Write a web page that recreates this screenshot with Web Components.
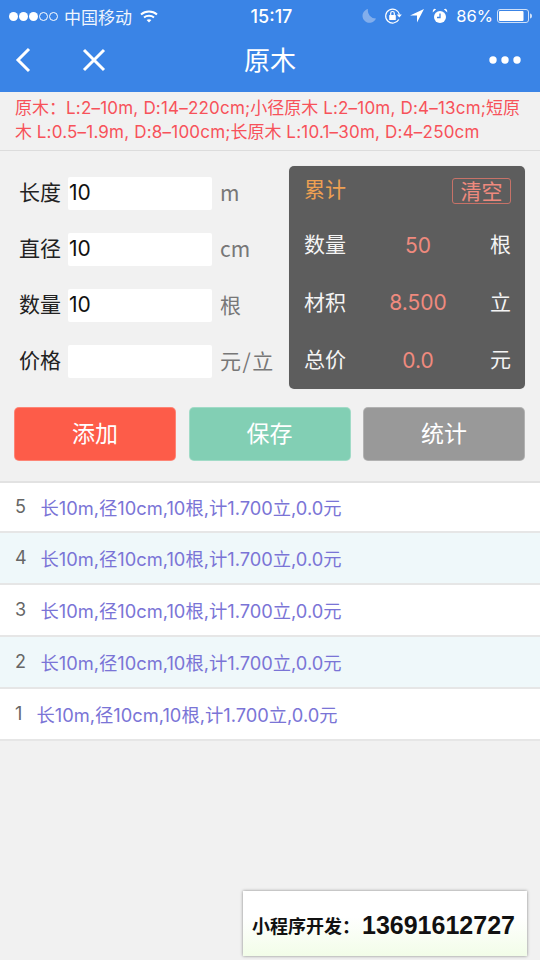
<!DOCTYPE html>
<html><head><meta charset="utf-8">
<style>
html,body{margin:0;padding:0;width:540px;height:960px;overflow:hidden;background:#f1f1f1;font-family:"Inter","Noto Sans CJK SC",sans-serif;}
</style></head><body>
<app-page></app-page>
<script>
function def(name,css,html){
  customElements.define(name,class extends HTMLElement{
    constructor(){super();const s=this.attachShadow({mode:'open'});
      s.innerHTML='<style>'+css+'</style>'+(typeof html==='function'?html(this):html);}
  });
}
def('status-bar',`:host{display:flex;align-items:center;height:32px;padding:0 7px 0 9px;color:#fff;font:17px Inter,"Noto Sans CJK SC",sans-serif;box-sizing:border-box;position:relative}
.l,.r{flex:1;display:flex;align-items:center}.r{justify-content:flex-end}
.dots{display:flex;gap:1px;margin-right:6px}.d{width:9px;height:9px;border-radius:50%;background:#fff;box-sizing:border-box}.d.o{background:none;border:1px solid #fff}
.c{position:absolute;left:3px;right:0;text-align:center;font-size:18px;font-weight:500;pointer-events:none}
svg{display:block}`,
`<div class="l"><div class="dots"><i class="d"></i><i class="d"></i><i class="d"></i><i class="d o"></i><i class="d o"></i></div><span style="opacity:.92">中国移动</span>
<svg style="margin-left:8px" width="18" height="13" viewBox="0 0 18 13" fill="none" stroke="#fff" stroke-width="2"><path d="M1 4.500C5.500.6 12.500.6 17 4.500"/><path d="M4 7.500c2.800-2.300 7.200-2.300 10 0"/><path d="M9 12.500 6.600 10c1.400-1 3.400-1 4.800 0z" fill="#fff" stroke="none"/></svg></div>
<div class="c">15:17</div>
<div class="r" style="font-size:16.500px">
<svg width="16" height="16" viewBox="0 0 16 16"><path d="M7 1a7 7 0 1 0 8 9.500A8 8 0 0 1 7 1z" fill="#82aeec"/></svg>
<svg style="margin-left:7px" width="18" height="18" viewBox="0 0 18 18" fill="none" stroke="#fff" stroke-width="1.200"><path d="M14.800 12.500A7 7 0 1 1 15.500 7.500"/><path d="M12.800 7.500h5l-2.500 3z" fill="#fff" stroke="none"/><rect x="5.200" y="8" width="6.600" height="5" rx=".6" fill="#fff" stroke="none"/><path d="M6.700 8V6.300a1.800 1.800 0 0 1 3.600 0V8"/></svg>
<svg style="margin-left:8px" width="14" height="14" viewBox="0 0 14 14"><path d="M14 0 0 6.500h7V13.500z" fill="#fff"/></svg>
<svg style="margin-left:8px" width="16" height="16" viewBox="0 0 16 16" fill="#fff"><circle cx="8" cy="9" r="6"/><path d="M.7 4.500 4.200 1.200 2.300.8 1 2zM15.300 4.500 11.800 1.200 13.700.8 15 2z"/><path d="M8 5.500V9.500H5" stroke="#3a84e6" stroke-width="1.300" fill="none"/></svg>
<span style="margin-left:8px">86%</span>
<svg style="margin-left:4px" width="36" height="14" viewBox="0 0 36 14"><rect x=".5" y=".5" width="31" height="13" rx="2.500" fill="none" stroke="#cfe0f8"/><rect x="2" y="2" width="24.500" height="10" rx="1" fill="#fff"/><path d="M33 4.500c1.200.2 2 1 2 2.500s-.8 2.300-2 2.500z" fill="#cfe0f8"/></svg>
</div>`);
def('nav-bar',`:host{display:flex;align-items:center;box-sizing:border-box;height:60px;padding:0 16px 4px 15px;position:relative;color:#fff}
.t{position:absolute;left:0;right:0;text-align:center;font:26px "Noto Sans CJK SC",sans-serif;top:7px;line-height:40px}
svg{display:block}.x{margin-left:51px}.m{margin-left:auto}`,
`<svg width="16" height="26" viewBox="0 0 16 26" fill="none" stroke="#fff" stroke-width="3"><path d="M14 2 3 13l11 11"/></svg>
<svg class="x" width="24" height="24" viewBox="0 0 24 24" fill="none" stroke="#fff" stroke-width="3"><path d="M2 2l20 20M22 2 2 22"/></svg>
<div class="t">原木</div>
<svg class="m" width="32" height="8" viewBox="0 0 32 8" fill="#fff" style="margin-right:3px"><circle cx="4" cy="4" r="3.700"/><circle cx="16" cy="4" r="3.700"/><circle cx="28" cy="4" r="3.700"/></svg>`);
def('note-text',`:host{display:block;box-sizing:border-box;height:59px;padding:4px 10px 0 15px;color:#f7525a;font:17px/24px "Inter","Noto Sans CJK SC",sans-serif;background:#f1f1f1;border-bottom:1px solid #dcdcdc}
span{letter-spacing:.2px}`,
`原木：<span>L:2–10m, D:14–220cm;</span>小径原木 <span>L:2–10m, D:4–13cm;</span>短原木 <span>L:0.5–1.9m, D:8–100cm;</span>长原木 <span>L:10.1–30m, D:4–250cm</span>`);
def('form-row',`:host{display:flex;align-items:center;height:33px;color:#222;font:21px "Noto Sans CJK SC",sans-serif}
.lb{width:49px;flex:none;font-size:21px;line-height:31px;padding-bottom:4px;white-space:nowrap}
.in{width:144px;height:33px;background:#fff;border-radius:2px;box-sizing:border-box;padding-left:1px;font:21px/32px Inter,sans-serif;color:#111}
.u{margin-left:8px;color:#777;font-size:21px;line-height:31px;padding-bottom:2px;white-space:nowrap;letter-spacing:var(--ls,0)}`,
t=>`<span class="lb">${t.getAttribute('label')}</span><div class="in">${t.getAttribute('value')||''}</div><span class="u">${t.getAttribute('unit')}</span>`);
def('sum-row',`:host{display:flex;align-items:center;justify-content:space-between;color:#f4f4f4;font:21px "Noto Sans CJK SC",sans-serif;height:57.500px}
span{padding-bottom:3px}
.v{color:#ef8a7e;font:21px Inter,sans-serif;flex:1;text-align:center;padding:1px 0 0}`,
t=>`<span>${t.getAttribute('label')}</span><span class="v">${t.getAttribute('value')}</span><span>${t.getAttribute('unit')}</span>`);
def('sum-card',`:host{display:block;box-sizing:border-box;width:236px;height:223px;background:#5d5d5d;border-radius:5px;padding:8px 14px 0 15px;box-shadow:0 0 0 1px #eee;margin-left:-.5px}
.h{display:flex;justify-content:space-between;align-items:center;height:28px;margin-bottom:14px;font:21px "Noto Sans CJK SC",sans-serif;color:#eea052}
.b{box-sizing:border-box;border:1px solid #c77268;border-radius:3px;height:26px;width:59px;text-align:center;color:#ef8a7e;font-size:21px;line-height:23px;margin-top:5px}`,
`<div class="h"><span>累计</span><span class="b">清空</span></div><slot></slot>`);
def('act-btn',`:host{display:block;box-sizing:border-box;height:54px;border-radius:5px;color:#fff;text-align:center;font:23px/48px "Noto Sans CJK SC",sans-serif;background:var(--bg);border:1px solid rgba(255,255,255,.25)}`,`<slot></slot>`);
def('rec-row',`:host{display:flex;align-items:center;box-sizing:border-box;height:var(--h,52px);padding-left:15px;background:var(--bg,#fff);border-bottom:2px solid #e6e6e6;font:18.300px Inter,"Noto Sans CJK SC",sans-serif;color:#7a74d6;white-space:nowrap}
.n{color:#666;font-size:18px;width:var(--nw,25.500px)}`,
t=>`<span class="n">${t.getAttribute('n')}</span><span>长10m,径10cm,10根,计1.700立,0.0元</span>`);
def('ad-box',`:host{position:absolute;left:243px;top:891px;width:284px;height:65px;box-sizing:border-box;background:linear-gradient(#fff 40%,#f2fde8);box-shadow:0 0 3px rgba(0,0,0,.45);color:#111;display:flex;align-items:center;padding:3px 0 0 9px;font:bold 18px "Noto Sans CJK SC",sans-serif;white-space:nowrap}
b{font:bold 25px "Liberation Sans",sans-serif;margin-left:2px}`,`<span>小程序开发：</span><b>13691612727</b>`);
def('app-page',`:host{display:block;width:540px;height:960px;position:relative;background:#f1f1f1;overflow:hidden}
.top{background:#3a84e6}
.form{display:flex;padding:15px 15px 0 19px;height:238px;box-sizing:border-box}
.left{display:flex;flex-direction:column;gap:23px;padding-top:11px;width:270.500px;flex:none}
.btns{display:grid;grid-template-columns:162px 162px 162px;column-gap:12.500px;padding:0 14px;margin-top:18px}
.list{margin-top:19.500px;border-top:2px solid #e2e2e2}`,
`<div class="top"><status-bar></status-bar><nav-bar></nav-bar></div>
<note-text></note-text>
<div class="form"><div class="left">
<form-row label="长度" value="10" unit="m"></form-row>
<form-row label="直径" value="10" unit="cm"></form-row>
<form-row label="数量" value="10" unit="根"></form-row>
<form-row label="价格" value="" unit="元/立" style="--ls:1.500px"></form-row>
</div><sum-card>
<sum-row label="数量" value="50" unit="根"></sum-row>
<sum-row label="材积" value="8.500" unit="立"></sum-row>
<sum-row label="总价" value="0.0" unit="元"></sum-row>
</sum-card></div>
<div class="btns"><act-btn style="--bg:#fd5c49">添加</act-btn><act-btn style="--bg:#82cfb4">保存</act-btn><act-btn style="--bg:#999">统计</act-btn></div>
<div class="list">
<rec-row n="5" style="--h:50px"></rec-row>
<rec-row n="4" style="--bg:#eff8fa"></rec-row>
<rec-row n="3"></rec-row>
<rec-row n="2" style="--bg:#eff8fa"></rec-row>
<rec-row n="1" style="--nw:21.500px"></rec-row>
</div>
<ad-box></ad-box>`);
</script></body></html>
